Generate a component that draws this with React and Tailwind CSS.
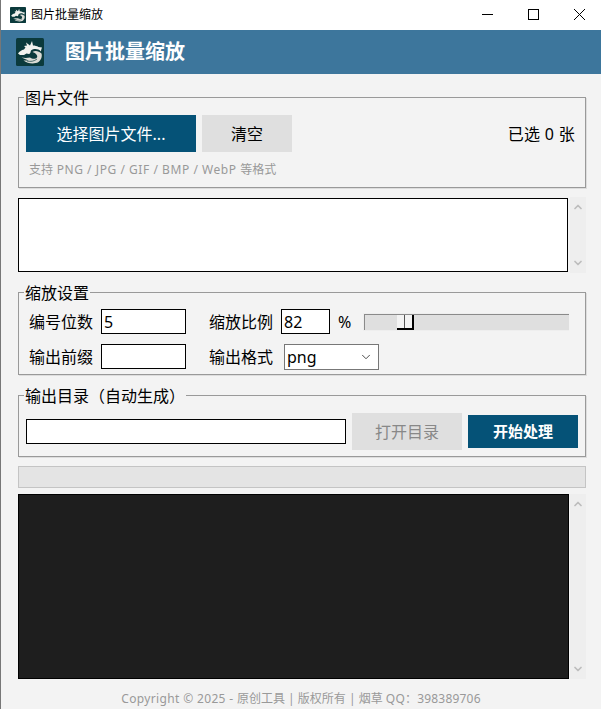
import { ChevronDown } from "lucide-react";

const font = { fontFamily: '"Noto Sans", "Noto Sans CJK SC", sans-serif' };

function Dragon({ size }) {
  return (
    <svg width={size} height={size} viewBox="0 0 28 28" className="shrink-0">
      <rect width="28" height="28" rx="1.5" fill="#0b3a3c" />
      {/* horns + head */}
      <path
        d="M10 4.5 L14 7.5 L16 3 L17 7.5 C19 7.5 21 8 22.5 9 L26 9.5 C25.5 11 25 12 25 13.5 C22 10.5 18 10.5 15 12.5 C14.5 14 14.5 15.5 13 16 L10.5 15.5 L8 17 L4 17 L2 15.5 C3.5 13.5 5.5 12 8 11.5 L9.5 9.5 L8 8 L11 7.5 Z"
        fill="#f2f2ee"
      />
      {/* coiled body */}
      <path
        d="M16.5 14 C19 12 23 13 25.5 15.5 C26.5 18.5 25 22 22.5 24 C18 26.5 11.5 25.5 7.5 22.5 L12.5 22.5 L5.5 19.5 C8 20 11.5 20 14 19.5 C16 21 19.5 21.5 21 19.5 C22 17.5 20 15 16.5 14 Z"
        fill="#dcdcd6"
      />
      <path d="M21 21 C18 23.5 14.5 23.8 11 23" fill="none" stroke="#0b3a3c" strokeWidth="0.7" />
    </svg>
  );
}

function Scrollbar() {
  return (
    <div className="flex w-4 flex-col items-center justify-between bg-[#eeeeee] py-[4px] text-[#bdbdbd]">
      <ChevronDown size={12} strokeWidth={3.5} className="rotate-180" />
      <ChevronDown size={12} strokeWidth={3.5} />
    </div>
  );
}

function Group({ title, className, children }) {
  return (
    <fieldset className={`ml-[17px] w-[568px] border border-[#999999] shadow-[1px_1px_0_#dddddd] ${className}`}>
      <legend className="ml-[5px] h-[11px] px-px text-[16px] leading-[12px] text-black">{title}</legend>
      {children}
    </fieldset>
  );
}

export default function App() {
  return (
    <div className="flex h-[709px] w-[601px] flex-col overflow-hidden border-l border-[#777777] bg-[#f3f3f3]" style={font}>
      <div className="flex h-[30px] shrink-0 items-center bg-white pl-[9px]">
        <Dragon size={16} />
        <span className="ml-[5px] text-[12px] text-black">图片批量缩放</span>
        <div className="ml-auto flex items-center text-black">
          <svg width="46" height="30" viewBox="0 0 46 30"><path d="M17 14.5h11" stroke="#000" /></svg>
          <svg width="45" height="30" viewBox="0 0 45 30"><rect x="17.5" y="9.5" width="10" height="10" fill="none" stroke="#000" /></svg>
          <svg width="46" height="30" viewBox="0 0 46 30" className="mr-[-1px]"><path d="M18 9l11 11M29 9l-11 11" stroke="#000" /></svg>
        </div>
      </div>

      <div className="flex h-[44px] shrink-0 items-center bg-[#3d769c] pl-[15px]">
        <Dragon size={28} />
        <span className="ml-[21px] text-[20px] font-bold text-white">图片批量缩放</span>
      </div>

      <Group title="图片文件" className="mt-[18px] h-[96px]">
        <div className="flex items-center pl-[7px] pr-[10px] pt-[12px]">
          <button className="h-[37px] w-[170px] bg-[#055277] text-[16px] text-white">选择图片文件...</button>
          <button className="ml-[6px] h-[37px] w-[90px] bg-[#dfdfdf] text-[16px] text-black">清空</button>
          <span className="ml-auto text-[16px] tracking-[0.3px] text-black">已选 0 张</span>
        </div>
        <p className="ml-[10px] mt-[9px] text-[12px] leading-[18px] text-[#999999]">
          支持<span className="tracking-[0.55px]"> PNG / JPG / GIF / BMP / WebP </span>等格式
        </p>
      </Group>

      <div className="ml-[17px] mt-[9px] flex h-[76px] w-[568px] gap-[2px]">
        <div className="my-px h-[74px] flex-1 border border-black bg-white" />
        <Scrollbar />
      </div>

      <Group title="缩放设置" className="mt-[14px] h-[88px]">
        <div className="mt-[11px] flex h-[25px] items-center pl-[10px]">
          <span className="w-[72px] text-[16px]">编号位数</span>
          <input readOnly value="5" className="h-[25px] w-[85px] border border-black bg-white pl-[2px] text-[16px] text-black outline-none" />
          <span className="ml-[23px] w-[72px] text-[16px]">缩放比例</span>
          <input readOnly value="82" className="h-[25px] w-[49px] border border-black bg-white pl-[2px] text-[16px] text-black outline-none" />
          <span className="ml-[8px] text-[16px]">%</span>
          <div className="ml-[12px] flex h-[18px] w-[206px] items-center justify-center bg-[#eeeeee]">
            <div className="relative h-4 w-[205px] border-l border-t border-[#8a8a8a] bg-[#dfdfdf]">
              <div className="absolute left-[32px] top-0 h-[15px] w-[17px] border-b-2 border-r-2 border-black bg-[#f3f3f3]">
                <div className="ml-[7px] h-full w-px bg-[#555555]" />
              </div>
            </div>
          </div>
        </div>
        <div className="mt-[10px] flex h-[25px] items-center pl-[10px]">
          <span className="w-[72px] text-[16px]">输出前缀</span>
          <input readOnly className="h-[25px] w-[85px] border border-black bg-white outline-none" />
          <span className="ml-[23px] w-[75px] text-[16px]">输出格式</span>
          <div className="flex h-[26px] w-[95px] items-center justify-between border border-[#777777] bg-white pl-[2px] pr-[5px] text-[16px]">
            png
            <ChevronDown size={14} strokeWidth={1.5} className="text-[#333333]" />
          </div>
        </div>
      </Group>

      <Group title="输出目录（自动生成）" className="mt-[15px] h-[67px]">
        <div className="flex items-center pl-[7px] pt-[12px]">
          <input readOnly className="h-[25px] w-[320px] border border-black bg-white outline-none" />
          <button className="ml-[6px] h-[37px] w-[110px] bg-[#dfdfdf] text-[16px] text-[#888888]">打开目录</button>
          <button className="ml-[6px] h-[33px] w-[110px] bg-[#055277] text-[15px] font-bold text-white">开始处理</button>
        </div>
      </Group>

      <div className="ml-[17px] mt-[9px] h-[22px] w-[568px] border border-[#c4c4c4] bg-[#e4e4e4]" />

      <div className="ml-[17px] mt-[6px] flex h-[185px] w-[568px] gap-px">
        <div className="flex-1 border border-black bg-[#1e1e1e]" />
        <Scrollbar />
      </div>

      <p className="mt-[11px] text-center text-[12px] text-[#999999]">
        <span className="tracking-[0.35px]">Copyright © 2025 - </span>原创工具 | 版权所有 | 烟草 <span className="tracking-[0.2px]">QQ：398389706</span>
      </p>
    </div>
  );
}
